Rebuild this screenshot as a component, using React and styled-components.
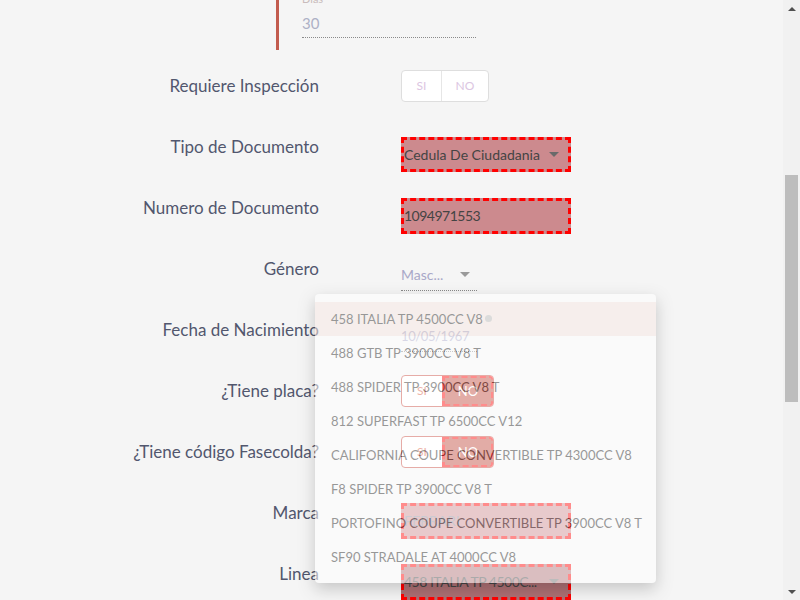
import React from "react";
import styled, { createGlobalStyle } from "styled-components";

const GlobalStyle = createGlobalStyle`
  html, body {
    margin: 0;
    padding: 0;
    background: #f5f5f5;
    overflow: hidden;
  }
  body {
    font-family: Lato, "Open Sans", sans-serif;
  }
`;

const Shell = styled.div`
  display: flex;
  height: 100vh;
  width: 100%;
`;

const Main = styled.div`
  flex: 1;
  position: relative;
  display: flex;
  flex-direction: column;
  overflow: hidden;
`;

const SubGroup = styled.div`
  flex-shrink: 0;
  margin-left: 276px;
  height: 50px;
  border-left: 3px solid #c25b4e;
  padding-left: 23px;
  box-sizing: border-box;
`;

const SubField = styled.div`
  width: 174px;
  margin-top: -7px;
`;

const SubLabel = styled.div`
  font-size: 11px;
  line-height: 12px;
  color: #c9bcbc;
`;

const SubValue = styled.div`
  margin-top: 6px;
  font-size: 15px;
  line-height: 24px;
  color: #adb1c6;
  padding-bottom: 2px;
  border-bottom: 1px dotted #8a8a8a;
`;

const Form = styled.div`
  flex-shrink: 0;
  display: grid;
  grid-template-columns: 319px 1fr;
  column-gap: 82px;
  grid-auto-rows: 61px;
  align-items: center;
  margin-top: 5px;
`;

const Label = styled.div`
  text-align: right;
  font-size: 17px;
  line-height: 20px;
  color: #52576e;
  white-space: nowrap;
`;

const Field = styled.div`
  padding-top: 16px;
`;

const Caret = styled.span`
  width: 0;
  height: 0;
  border-left: 5px solid transparent;
  border-right: 5px solid transparent;
  border-top: 5px solid ${(p) => p.color || "#6a6a6a"};
  flex-shrink: 0;
`;

const FilledBox = styled.div`
  width: 170px;
  height: ${(p) => p.h || 36}px;
  box-sizing: border-box;
  border: 3px dashed #ff0000;
  background: ${(p) => p.bg || "#cc8a8e"};
  display: flex;
  align-items: center;
  justify-content: space-between;
  padding: 0 9px 0 0;
  font-size: 14px;
  letter-spacing: ${(p) => (p.tight ? "-0.5px" : "0")};
  color: ${(p) => p.color || "#444"};
  white-space: nowrap;
  overflow: hidden;
`;

const Underlined = styled.div`
  width: 76px;
  box-sizing: border-box;
  display: flex;
  align-items: center;
  justify-content: space-between;
  padding: 0 7px 3px 0;
  border-bottom: 1px dotted #8a8a8a;
  font-size: ${(p) => (p.tight ? 13 : 14)}px;
  letter-spacing: ${(p) => (p.tight ? "-0.4px" : "0")};
  line-height: 24px;
  color: #a9a8c8;
  white-space: nowrap;
`;

const Toggle = styled.div`
  display: flex;
  width: max-content;
  height: 32px;
  box-sizing: border-box;
  border: 1px solid ${(p) => (p.active ? "#c9473c" : "#dedede")};
  border-radius: 4px;
  background: #fff;
  overflow: hidden;
`;

const ToggleOption = styled.div`
  width: ${(p) => p.w}px;
  box-sizing: border-box;
  display: flex;
  align-items: center;
  justify-content: center;
  font-size: 12px;
  color: ${(p) => p.color || "#dcc6e2"};
  background: ${(p) => p.bg || "transparent"};
  border-left: ${(p) => (p.divider ? "1px solid #e6e6e6" : "none")};
  ${(p) =>
    p.selected &&
    `
    border: 3px dashed #ff0000;
    border-radius: 0 4px 4px 0;
    margin: -1px -1px -1px 0;
    font-size: 13px;
  `}
`;

const Dropdown = styled.div`
  position: absolute;
  left: 315px;
  top: 294px;
  width: 341px;
  height: 289px;
  box-sizing: border-box;
  padding-top: 8px;
  background: #fff;
  border-radius: 4px;
  box-shadow: 0 6px 16px rgba(0, 0, 0, 0.35);
  opacity: 0.55;
  overflow: hidden;
`;

const Item = styled.div`
  height: 34px;
  line-height: 34px;
  padding-left: 16px;
  font-size: 13px;
  color: #4c4c4c;
  background: ${(p) => (p.active ? "#f7eae5" : "transparent")};
  white-space: nowrap;
  display: flex;
  align-items: center;
`;

const Dot = styled.span`
  width: 7px;
  height: 7px;
  border-radius: 50%;
  background: #c6c6c6;
  margin-left: 2px;
  margin-top: -2px;
`;

const Scrollbar = styled.div`
  width: 17px;
  background: #f1f1f1;
  display: flex;
  flex-direction: column;
`;

const ArrowButton = styled.div`
  height: 17px;
  display: flex;
  align-items: center;
  justify-content: center;
`;

const Arrow = styled.span`
  width: 0;
  height: 0;
  border-left: 4px solid transparent;
  border-right: 4px solid transparent;
  ${(p) =>
    p.up ? "border-bottom: 4px solid #505050;" : "border-top: 4px solid #505050;"}
`;

const Track = styled.div`
  flex: 1;
  padding: 0 2px;
`;

const Thumb = styled.div`
  margin-top: ${(p) => p.offset}px;
  height: ${(p) => p.size}px;
  background: #bdbdbd;
`;

const lineas = [
  "458 ITALIA TP 4500CC V8",
  "488 GTB TP 3900CC V8 T",
  "488 SPIDER TP 3900CC V8 T",
  "812 SUPERFAST TP 6500CC V12",
  "CALIFORNIA COUPE CONVERTIBLE TP 4300CC V8",
  "F8 SPIDER TP 3900CC V8 T",
  "PORTOFINO COUPE CONVERTIBLE TP 3900CC V8 T",
  "SF90 STRADALE AT 4000CC V8",
];

const YesNo = ({ active }) =>
  active ? (
    <Toggle active>
      <ToggleOption w={40} color="#d9583c">
        SI
      </ToggleOption>
      <ToggleOption w={52} selected bg="#bf473a" color="#fff">
        NO
      </ToggleOption>
    </Toggle>
  ) : (
    <Toggle>
      <ToggleOption w={39}>SI</ToggleOption>
      <ToggleOption w={47} divider>
        NO
      </ToggleOption>
    </Toggle>
  );

export default function App() {
  return (
    <>
      <GlobalStyle />
      <Shell>
        <Main>
          <SubGroup>
            <SubField>
              <SubLabel>Días</SubLabel>
              <SubValue>30</SubValue>
            </SubField>
          </SubGroup>

          <Form>
            <Label>Requiere Inspección</Label>
            <div>
              <YesNo />
            </div>

            <Label>Tipo de Documento</Label>
            <Field>
              <FilledBox h={35}>
                <span>Cedula De Ciudadania</span>
                <Caret />
              </FilledBox>
            </Field>

            <Label>Numero de Documento</Label>
            <Field>
              <FilledBox tight>
                <span>1094971553</span>
              </FilledBox>
            </Field>

            <Label>Género</Label>
            <Field>
              <Underlined>
                <span>Masc...</span>
                <Caret color="#9a9a9a" />
              </Underlined>
            </Field>

            <Label>Fecha de Nacimiento</Label>
            <Field>
              <Underlined tight>
                <span>10/05/1967</span>
              </Underlined>
            </Field>

            <Label>¿Tiene placa?</Label>
            <div>
              <YesNo active />
            </div>

            <Label>¿Tiene código Fasecolda?</Label>
            <div>
              <YesNo active />
            </div>

            <Label>Marca</Label>
            <Field>
              <FilledBox color="#8c8c9c">
                <span>FERRARI</span>
              </FilledBox>
            </Field>

            <Label>Linea</Label>
            <Field>
              <FilledBox bg="#ad7074" tight>
                <span>458 ITALIA TP 4500C...</span>
                <Caret />
              </FilledBox>
            </Field>
          </Form>

          <Dropdown>
            {lineas.map((l, i) => (
              <Item key={l} active={i === 0}>
                {l}
                {i === 0 && <Dot />}
              </Item>
            ))}
          </Dropdown>
        </Main>

        <Scrollbar>
          <ArrowButton>
            <Arrow up />
          </ArrowButton>
          <Track>
            <Thumb offset={158} size={227} />
          </Track>
          <ArrowButton>
            <Arrow />
          </ArrowButton>
        </Scrollbar>
      </Shell>
    </>
  );
}
